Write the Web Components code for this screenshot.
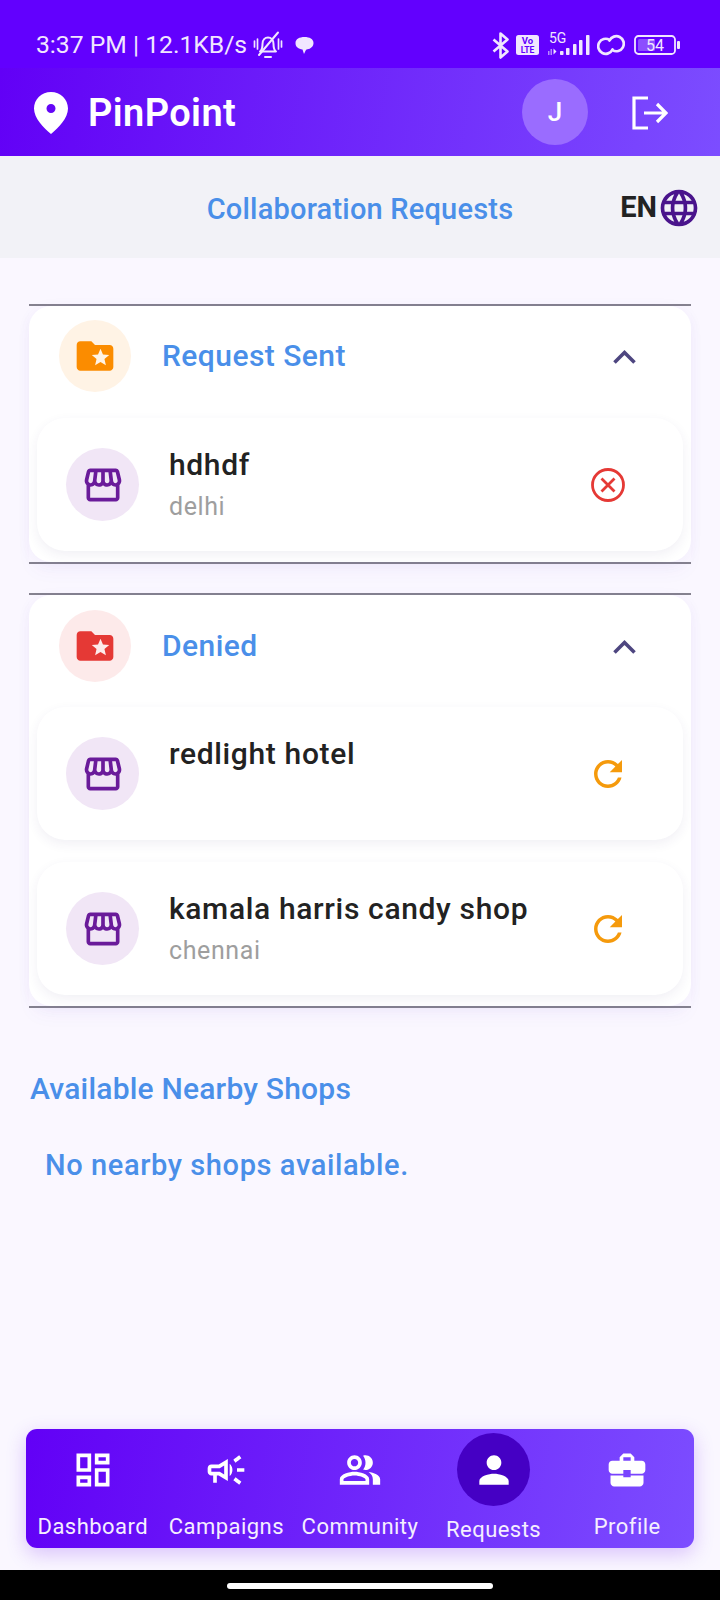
<!DOCTYPE html>
<html lang="en">
<head>
<meta charset="utf-8">
<title>PinPoint</title>
<style>
html,body{margin:0;padding:0;width:720px;height:1600px;overflow:hidden;background:#faf7ff;font-family:Roboto,"Noto Sans",sans-serif}
</style>
</head>
<body>
<pin-page>
  <status-bar slot="status"></status-bar>
  <app-bar slot="app"></app-bar>
  <sub-header slot="sub" heading="Collaboration Requests"></sub-header>

  <request-section tone="orange" heading="Request Sent">
    <shop-card name="hdhdf" place="delhi" action="cancel"></shop-card>
  </request-section>
  <request-section tone="red" heading="Denied">
    <shop-card name="redlight hotel" action="retry"></shop-card>
    <shop-card name="kamala harris candy shop" place="chennai" action="retry"></shop-card>
  </request-section>
  <nearby-block slot="nearby"></nearby-block>

  <bottom-nav slot="nav"></bottom-nav>
  <home-strip slot="home"></home-strip>
</pin-page>

<script>
const ICONS = {
  folder:'M20 6h-8l-2-2H4c-1.11 0-1.99.89-1.99 2L2 18c0 1.11.89 2 2 2h16c1.11 0 2-.89 2-2V8c0-1.11-.89-2-2-2zm-2.06 11L15 15.28 12.06 17l.78-3.33-2.59-2.24 3.41-.29L15 8l1.34 3.14 3.41.29-2.59 2.24.78 3.33z',
  store:'M21.9 8.89l-1.05-4.37c-.22-.9-1-1.52-1.91-1.52H5.05c-.9 0-1.69.63-1.9 1.52L2.1 8.89c-.24 1.02-.02 2.06.62 2.88.08.11.19.19.28.29V19c0 1.1.9 2 2 2h14c1.1 0 2-.9 2-2v-6.94c.09-.09.2-.18.28-.28.64-.82.87-1.87.62-2.89zm-2.99-3.9l1.05 4.37c.1.42.01.84-.25 1.17-.14.18-.44.47-.94.47-.61 0-1.14-.49-1.21-1.14L16.98 5l1.93-.01zM13 5h1.96l.54 4.52c.05.39-.07.78-.33 1.07-.22.26-.54.41-.95.41-.67 0-1.22-.59-1.22-1.31V5zM8.49 9.52L9.04 5H11v4.69c0 .72-.55 1.31-1.29 1.31-.34 0-.65-.15-.89-.41-.25-.29-.37-.68-.33-1.07zm-4.45-.16L5.05 5h1.97l-.58 4.86c-.08.65-.6 1.14-1.21 1.14-.49 0-.8-.29-.93-.47-.27-.32-.36-.75-.26-1.17zM5 19v-6.03c.08.01.15.03.23.03.87 0 1.66-.36 2.24-.95.6.6 1.4.95 2.31.95.87 0 1.65-.36 2.23-.93.59.57 1.39.93 2.29.93.84 0 1.64-.35 2.24-.95.58.59 1.37.95 2.24.95.08 0 .15-.02.23-.03V19H5z',
  refresh:'M17.65 6.35C16.2 4.9 14.21 4 12 4c-4.42 0-7.99 3.58-7.99 8s3.57 8 7.99 8c3.73 0 6.84-2.55 7.73-6h-2.08c-.82 2.33-3.04 4-5.65 4-3.31 0-6-2.69-6-6s2.69-6 6-6c1.66 0 3.14.69 4.22 1.78L13 11h7V4l-2.35 2.35z',
  globe:'M11.99 2C6.47 2 2 6.48 2 12s4.47 10 9.99 10C17.52 22 22 17.52 22 12S17.52 2 11.99 2zm6.93 6h-2.95c-.32-1.25-.78-2.45-1.38-3.56 1.84.63 3.37 1.91 4.33 3.56zM12 4.04c.83 1.2 1.48 2.53 1.91 3.96h-3.82c.43-1.43 1.08-2.76 1.91-3.96zM4.26 14C4.1 13.36 4 12.69 4 12s.1-1.36.26-2h3.38c-.08.66-.14 1.32-.14 2 0 .68.06 1.34.14 2H4.26zm.82 2h2.95c.32 1.25.78 2.45 1.38 3.56-1.84-.63-3.37-1.9-4.33-3.56zm2.95-8H5.08c.96-1.66 2.49-2.93 4.33-3.56C8.81 5.55 8.35 6.75 8.03 8zM12 19.96c-.83-1.2-1.48-2.53-1.91-3.96h3.82c-.43 1.43-1.08 2.76-1.91 3.96zM14.34 14H9.66c-.09-.66-.16-1.32-.16-2 0-.68.07-1.35.16-2h4.68c.09.65.16 1.32.16 2 0 .68-.07 1.34-.16 2zm.25 5.56c.6-1.11 1.06-2.31 1.38-3.56h2.95c-.96 1.65-2.49 2.93-4.33 3.56zM16.36 14c.08-.66.14-1.32.14-2 0-.68-.06-1.34-.14-2h3.38c.16.64.26 1.31.26 2s-.1 1.36-.26 2h-3.38z',
  dashboard:'M19 5v2h-4V5h4M9 5v6H5V5h4m10 8v6h-4v-6h4M9 17v2H5v-2h4M21 3h-8v6h8V3zM11 3H3v10h8V3zm10 8h-8v10h8V11zm-10 4H3v6h8v-6z',
  campaign:'M18 11v2h4v-2h-4zm-2 6.61c.96.71 2.21 1.65 3.2 2.39.4-.53.8-1.07 1.2-1.6-.99-.74-2.24-1.68-3.2-2.4-.4.54-.8 1.08-1.2 1.61zM20.4 5.6c-.4-.53-.8-1.07-1.2-1.6-.99.74-2.24 1.68-3.2 2.4.4.53.8 1.07 1.2 1.6.96-.72 2.21-1.65 3.2-2.4zM4 9c-1.1 0-2 .9-2 2v2c0 1.1.9 2 2 2h1v4h2v-4h1l5 3V6L8 9H4zm5.03 1.71L11 9.53v4.94l-1.97-1.18-.48-.29H4v-2h4.55l.48-.29zM15.5 12c0-1.33-.58-2.53-1.5-3.35v6.69c.92-.81 1.5-2.01 1.5-3.34z',
  people:'M16.67 13.13C18.04 14.06 19 15.32 19 17v3h4v-3c0-2.18-3.57-3.47-6.33-3.87zM9 12c2.21 0 4-1.79 4-4s-1.79-4-4-4-4 1.79-4 4 1.79 4 4 4zm0-6c1.1 0 2 .9 2 2s-.9 2-2 2-2-.9-2-2 .9-2 2-2zM15 12c2.21 0 4-1.79 4-4s-1.79-4-4-4c-.47 0-.91.1-1.33.24C14.5 5.27 15 6.58 15 8s-.5 2.73-1.33 3.76c.42.14.86.24 1.33.24zM9 13c-2.67 0-8 1.34-8 4v3h16v-3c0-2.66-5.33-4-8-4zm6 5H3v-.99C3.2 16.29 6.3 15 9 15s5.8 1.29 6 2z',
  person:'M12 12c2.21 0 4-1.79 4-4s-1.79-4-4-4-4 1.79-4 4 1.79 4 4 4zm0 2c-2.67 0-8 1.34-8 4v2h16v-2c0-2.66-5.33-4-8-4z',
  work:'M10 16v-1H3.01L3 19c0 1.11.89 2 2 2h14c1.11 0 2-.89 2-2v-4h-7v1h-4zm10-9h-4.01V5l-2-2h-4l-2 2v2H4c-1.1 0-2 .9-2 2v3c0 1.11.89 2 2 2h6v-2h4v2h6c1.1 0 2-.9 2-2V9c0-1.1-.9-2-2-2zm-6 0h-4V5h4v2z'
};
const icon = (name,size,color) => `<svg width="${size}" height="${size}" viewBox="0 0 24 24" fill="${color}" fill-rule="evenodd" aria-hidden="true" style="display:block;flex:none"><path d="${ICONS[name]}"/></svg>`;

function define(tag, css, html){
  customElements.define(tag, class extends HTMLElement{
    connectedCallback(){
      if(this.shadowRoot) return;
      const r=this.attachShadow({mode:'open'});
      r.innerHTML=`<style>${css}</style>`+(typeof html==='function'?html(this):html);
    }
  });
}

define('pin-page',`
  :host{display:flex;flex-direction:column;width:720px;height:1600px;background:#faf7ff;color:#222;font-family:Roboto,"Noto Sans",sans-serif}
  .main{display:flex;flex-direction:column;gap:29px;padding:46px 29px 0;flex:none}
  .spacer{flex:1}
  ::slotted(bottom-nav){margin:0 26px 22px}
`,`
  <slot name="status"></slot><slot name="app"></slot><slot name="sub"></slot>
  <div class="main"><slot></slot></div>
  <slot name="nearby"></slot>
  <div class="spacer"></div>
  <slot name="nav"></slot><slot name="home"></slot>
`);

define('status-bar',`
  :host{display:flex;align-items:center;justify-content:space-between;height:68px;box-sizing:border-box;padding:22px 39px 0 36px;background:#6200fe;color:#f1e6ff;font:400 24.7px/1 Roboto,sans-serif}
  .l,.r{display:flex;align-items:center}
  svg{display:block;flex:none}
  text{font-family:Roboto,sans-serif}
`,`
  <div class="l"><span>3:37 PM | 12.1KB/s</span>
    <svg width="30" height="28" viewBox="0 0 30 28" style="margin-left:6px" fill="none" stroke="#f1e6ff" stroke-width="2" stroke-linecap="round" stroke-linejoin="round">
      <path d="M7 20.500c2-1.500 2.500-3.500 2.500-7.500 0-4 2.500-6.500 5.500-6.500s5.500 2.500 5.500 6.500c0 4 .5 6 2.500 7.500z"/>
      <path d="M12 26h6"/><path d="M25 1.500L6 24"/>
      <path d="M1.500 10v6M4.500 8v10M25.500 8v10M28.500 10v6" stroke-width="1.700"/>
    </svg>
    <svg width="19" height="19" viewBox="0 0 19 19" style="margin-left:12px" fill="#f1e6ff"><path d="M9.500 1C14.500 1 18.500 3 18.500 7c0 3.500-3 6-6 6.300-.8.100-1.300.4-1.700 1L9 18 7.500 13.500C3.500 13 .5 11 .5 7 .5 3 4.500 1 9.500 1z"/></svg>
  </div>
  <div class="r">
    <svg width="17" height="27" viewBox="0 0 17 27" fill="none" stroke="#f1e6ff" stroke-width="2.600" stroke-linejoin="round"><path d="M1.500 7.500l14 12-7 6V1.500l7 6-14 12"/></svg>
    <svg width="23" height="20" viewBox="0 0 23 20" style="margin-left:7px"><rect width="23" height="20" rx="2.500" fill="#f1e6ff"/><text x="11.500" y="9" text-anchor="middle" font-size="9.500" font-weight="700" fill="#6200fe">Vo</text><text x="11.500" y="17.500" text-anchor="middle" font-size="8.500" font-weight="700" fill="#6200fe">LTE</text></svg>
    <svg width="43" height="30" viewBox="0 0 43 30" style="margin-left:8px">
      <text x="2" y="13" font-size="14" fill="#f1e6ff">5G</text>
      <g fill="#f1e6ff"><rect x="1" y="21" width="1.500" height="4" opacity=".6"/><rect x="3.500" y="19" width="1.500" height="6" opacity=".6"/><path d="M6.500 18.500l3 3-3 3z"/><rect x="13" y="21" width="3.500" height="4" rx=".8"/><rect x="19" y="18" width="3.500" height="7" rx=".8"/><rect x="26" y="14" width="3.500" height="11" rx=".8"/><rect x="32" y="10" width="3.500" height="15" rx=".8"/><rect x="39" y="5" width="3.500" height="20" rx=".8"/></g>
    </svg>
    <svg width="28" height="22" viewBox="0 0 28 22" style="margin-left:7px" fill="none" stroke="#f1e6ff" stroke-width="2.700" stroke-linecap="round"><path d="M12.500 5.800A7.500 7.500 0 1015.500 15.500"/><path d="M15.500 16.200A7.500 7.500 0 1012.500 6.500"/></svg>
    <svg width="47" height="22" viewBox="0 0 47 22" style="margin-left:9px">
      <rect x="1" y="2" width="40" height="18" rx="3.500" fill="none" stroke="#f1e6ff" stroke-width="1.800"/>
      <rect x="4" y="5" width="17" height="12" rx="1.500" fill="#8c4dff"/>
      <rect x="43" y="7" width="3" height="8" rx="1" fill="#f1e6ff"/>
      <text x="21" y="17" text-anchor="middle" font-size="16" fill="#f1e6ff">54</text>
    </svg>
  </div>
`);

define('app-bar',`
  :host{display:flex;align-items:center;height:88px;box-sizing:border-box;padding:2px 0 0 34px;background:linear-gradient(100deg,#6200f6 0%,#7c4dff 100%);color:#fff}
  h1{margin:0 0 0 20px;font:600 38px/1 Roboto,sans-serif;letter-spacing:.4px;flex:1}
  .av{width:66px;height:66px;margin-top:-2px;border-radius:50%;background:#9a6cff;display:flex;align-items:center;justify-content:center;font:500 26px/1 Roboto,sans-serif;margin-right:44px}
  svg{display:block;flex:none}
  .out{margin-right:52px}
`,`
  <svg width="34" height="42" viewBox="0 0 34 42" fill="#fff" fill-rule="evenodd"><path d="M17 0C7.600 0 0 7.400 0 16.500 0 26 9.500 36 17 42c7.500-6 17-16 17-25.500C34 7.400 26.400 0 17 0zm0 12a4.500 4.500 0 110 9 4.500 4.500 0 010-9z"/></svg>
  <h1>PinPoint</h1>
  <div class="av">J</div>
  <svg class="out" width="36" height="34" viewBox="0 0 36 34" fill="none" stroke="#fff" stroke-width="3.200" stroke-linejoin="miter"><path d="M16 2H2v30h14"/><path d="M12 17h22M25 8l9 9-9 9"/></svg>
`);

define('sub-header',`
  :host{display:grid;grid-template-columns:1fr auto 1fr;align-items:center;height:102px;box-sizing:border-box;background:#f2f2f7}
  h2{margin:4px 0 0;font:500 29px/1 Roboto,sans-serif;color:#4a8fe9;letter-spacing:.2px}
  .lang{justify-self:end;display:flex;align-items:center;margin:2px 19px 0 0;font:700 29px/1 Roboto,sans-serif;color:#222}
  .lang span{margin-top:-2px}
`,h=>`<span></span><h2>${h.getAttribute('heading')}</h2><div class="lang"><span>EN</span>${icon('globe',44,'#4a148c')}</div>`);

define('request-section',`
  :host{display:block;border-top:2px solid #85828f;border-bottom:2px solid #85828f;box-shadow:0 10px 20px -6px rgba(90,60,200,.05)}
  .card{background:#fff;border-radius:22px;padding-bottom:11px;box-shadow:0 2px 14px rgba(90,60,200,.05)}
  header{display:flex;align-items:flex-start;height:112px;padding:14px 0 0 30px;box-sizing:border-box}
  :host([tone=red]) header{padding-top:15px}
  .ic{width:72px;height:72px;border-radius:50%;display:flex;align-items:center;justify-content:center;flex:none}
  h3{margin:0 0 0 31px;font:500 30px/72px Roboto,sans-serif;color:#4a8fe9;letter-spacing:.45px;flex:1}
  svg.ch{margin:29px 55px 0 0;display:block}
  .list{display:flex;flex-direction:column;gap:22px;padding:0 8px}
  :host([tone=orange]) .ic{background:#fff3e5}
  :host([tone=red]) .ic{background:#fdeaea}
`,h=>{
  const orange=h.getAttribute('tone')==='orange';
  return `<div class="card"><header><div class="ic">${icon('folder',44,orange?'#fb8c00':'#e53935')}</div><h3>${h.getAttribute('heading')}</h3>
  <svg class="ch" width="23" height="15" viewBox="0 0 23 15" fill="none" stroke="#4e4680" stroke-width="3.600"><path d="M1.500 13.500l10-10 10 10"/></svg></header><div class="list"><slot></slot></div></div>`;
});

define('shop-card',`
  :host{display:flex;align-items:center;height:133px;box-sizing:border-box;padding:0 0 0 29px;background:#fff;border-radius:28px;box-shadow:0 4px 12px rgba(60,40,120,.07)}
  .av{width:73px;height:73px;border-radius:50%;background:#f1e6f6;display:flex;align-items:center;justify-content:center;flex:none}
  .txt{margin-left:30px;flex:1;align-self:flex-start;padding-top:29px}
  .n{font:500 30px/36px Roboto,sans-serif;color:#222;letter-spacing:.65px;white-space:nowrap}
  .p{font:400 25px/32px Roboto,sans-serif;color:#9e9e9e;margin-top:8px;letter-spacing:.6px;min-height:32px}
  .a{width:64px;display:flex;justify-content:center;margin-right:43px;flex:none}
`,h=>{
  const cancel=h.getAttribute('action')==='cancel';
  const a=cancel
    ?`<svg width="36" height="36" viewBox="0 0 36 36" fill="none" stroke="#e53935" stroke-width="2.800"><circle cx="18" cy="18" r="15.500"/><path d="M11.500 11.500l13 13M24.500 11.500l-13 13"/></svg>`
    :icon('refresh',42,'#f59a0c');
  return `<div class="av">${icon('store',44,'#6a1b9a')}</div><div class="txt"><div class="n">${h.getAttribute('name')}</div><div class="p">${h.getAttribute('place')||''}</div></div><div class="a">${a}</div>`;
});

define('nearby-block',`
  :host{display:block;padding:63px 0 0 30px}
  h4{margin:0;font:500 30px/36px Roboto,sans-serif;color:#4a8fe9;letter-spacing:.2px}
  p{margin:40px 0 0 15px;font:500 29px/36px Roboto,sans-serif;color:#4a8fe9;letter-spacing:.6px}
`,`<h4>Available Nearby Shops</h4><p>No nearby shops available.</p>`);

define('bottom-nav',`
  :host{display:grid;grid-template-columns:repeat(5,1fr);height:119px;border-radius:11px;background:linear-gradient(100deg,#6200f6 0%,#7c4dff 100%);box-shadow:0 6px 20px rgba(98,0,238,.22);flex:none}
`,`
  <nav-item icon="dashboard" label="Dashboard"></nav-item>
  <nav-item icon="campaign" label="Campaigns"></nav-item>
  <nav-item icon="people" label="Community"></nav-item>
  <nav-item icon="person" label="Requests" active></nav-item>
  <nav-item icon="work" label="Profile"></nav-item>
`);

define('nav-item',`
  :host{display:flex;flex-direction:column;align-items:center;color:#f5eeff;min-width:0}
  .ic{width:73px;height:73px;margin-top:4px;border-radius:50%;display:flex;align-items:center;justify-content:center}
  :host([active]) .ic{background:#4500c4}
  .t{font:450 22px/28px Roboto,sans-serif;letter-spacing:.45px;white-space:nowrap;margin-top:7px}
  :host([active]) .t{margin-top:10px}
`,h=>`<div class="ic">${icon(h.getAttribute('icon'),44,'#fff')}</div><div class="t">${h.getAttribute('label')}</div>`);

define('home-strip',`
  :host{display:flex;justify-content:center;align-items:flex-start;height:30px;box-sizing:border-box;padding-top:13px;background:#000;flex:none}
  i{display:block;width:266px;height:6px;border-radius:3px;background:#fff}
`,`<i></i>`);
</script>
</body>
</html>
